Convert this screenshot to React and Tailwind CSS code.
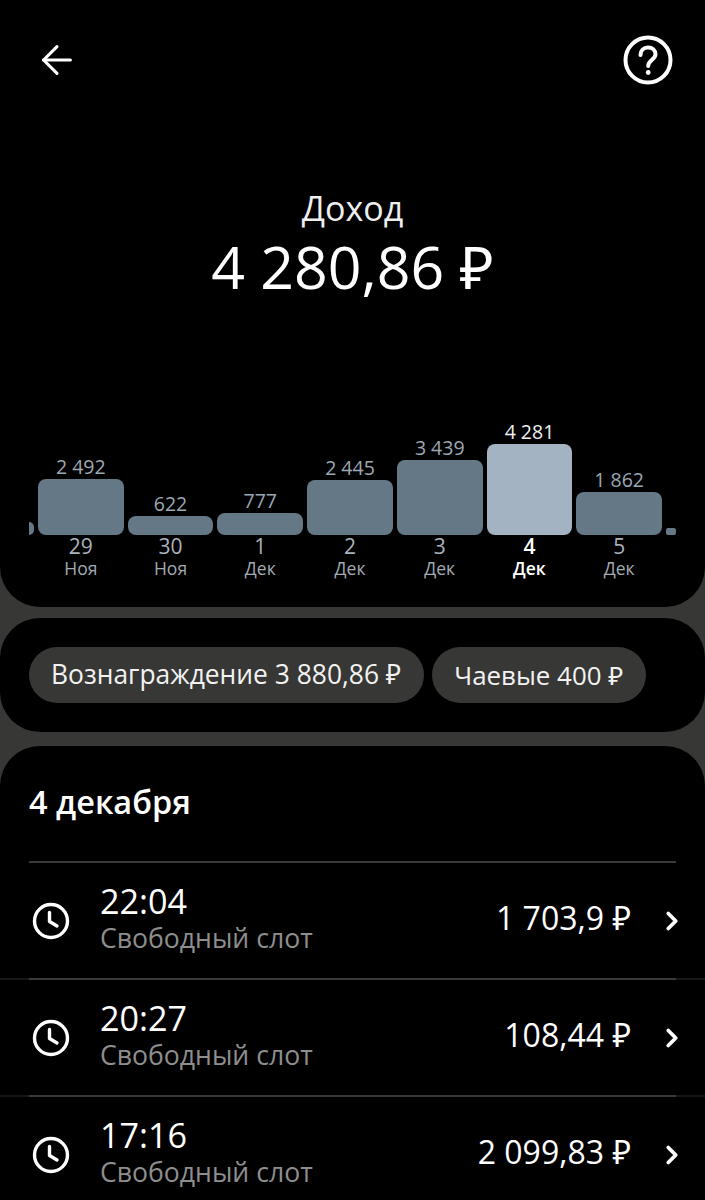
import React from "react";
import { ArrowLeft, ChevronRight } from "lucide-react";

const bars = [
  { value: "2 492", height: "h-[56px]", day: "29", month: "Ноя" },
  { value: "622", height: "h-[19px]", day: "30", month: "Ноя" },
  { value: "777", height: "h-[22px]", day: "1", month: "Дек" },
  { value: "2 445", height: "h-[55px]", day: "2", month: "Дек" },
  { value: "3 439", height: "h-[75px]", day: "3", month: "Дек" },
  { value: "4 281", height: "h-[91px]", day: "4", month: "Дек", active: true },
  { value: "1 862", height: "h-[43px]", day: "5", month: "Дек" },
];

const rows = [
  { time: "22:04", amount: "1 703,9 ₽" },
  { time: "20:27", amount: "108,44 ₽" },
  { time: "17:16", amount: "2 099,83 ₽" },
];

function ClockIcon() {
  return (
    <svg width="38" height="38" viewBox="0 0 38 38" fill="none" stroke="white" strokeWidth="3.4" strokeLinecap="round" strokeLinejoin="round">
      <circle cx="19" cy="19" r="16.5" />
      <path d="M17.5 10.5V19.5L25 24" />
    </svg>
  );
}

function HelpIcon() {
  return (
    <svg width="50" height="50" viewBox="0 0 50 50" fill="none" stroke="white" strokeWidth="4" strokeLinecap="round">
      <circle cx="25" cy="25" r="22.5" />
      <path d="M17.5 20C17.5 15.5 20.5 12.5 25 12.5C29.5 12.5 32.5 15.3 32.5 19.2C32.5 24.5 25.2 25 25.2 31" />
      <circle cx="25.2" cy="37.5" r="2.4" fill="white" stroke="none" />
    </svg>
  );
}

export default function App() {
  return (
    <div className="h-[1200px] overflow-hidden bg-[#373735] text-white font-['Open_Sans','Noto_Sans',sans-serif]">
      <div className="h-[607px] rounded-b-[40px] bg-black flex flex-col">
        <div className="flex items-center justify-between pl-[34px] pr-[32px] pt-[35px]">
          <ArrowLeft size={46} strokeWidth={1.6} />
          <HelpIcon />
        </div>

        <div className="mt-[101px] flex flex-col items-center">
          <div className="text-[34px] leading-[44px] text-[#eeeeee]">Доход</div>
          <div className="text-[59px] leading-[72px]">4 280,86 ₽</div>
        </div>

        <div className="mt-[118px] mx-[29px] flex items-end gap-[3.9px]">
          <div className="mb-[43px] h-[13px] w-[5px] rounded-r-full bg-[#657886]" />
          {bars.map((bar) => (
            <div key={bar.day} className="w-[86px] flex flex-col items-center">
              <div className={`text-[19.5px] leading-[24px] ${bar.active ? "text-[#eef1f3] font-medium" : "text-[#9ca8b3]"}`}>{bar.value}</div>
              <div className={`w-full rounded-[8px] ${bar.height} ${bar.active ? "bg-[#a3b3c2]" : "bg-[#657886]"}`} />
              <div className={`text-[21px] leading-[23px] ${bar.active ? "text-white font-semibold" : "text-[#aab2bb] font-medium"}`}>{bar.day}</div>
              <div className={`text-[17.5px] leading-[20px] ${bar.active ? "text-white font-semibold" : "text-[#a3abb4] font-medium"}`}>{bar.month}</div>
            </div>
          ))}
          <div className="mb-[43px] h-[7px] w-[10px] rounded-[2px] bg-[#657886]" />
        </div>
      </div>

      <div className="mt-[11px] h-[114px] rounded-[40px] bg-black flex items-center gap-[8px] px-[29px]">
        <div className="h-[56px] rounded-full bg-[#373735] pl-[22px] pr-[23px] flex items-center text-[26.4px] text-[#f2f2f2]">Вознаграждение 3 880,86 ₽</div>
        <div className="h-[56px] rounded-full bg-[#373735] pl-[22px] pr-[23px] flex items-center text-[25.9px] text-[#f2f2f2]">Чаевые 400 ₽</div>
      </div>

      <div className="mt-[14px] h-[500px] rounded-t-[40px] bg-black">
        <div className="px-[29px] pt-[36px] pb-[39px] text-[32.5px] leading-[40px] font-semibold">4 декабря</div>
        {rows.map((row, i) => (
          <div key={row.time} className={i > 0 ? "border-t-2 border-[#161616]" : ""}>
            <div className={`mx-[29px] h-[117px] border-t-2 border-[#3a3a3a] flex items-center ${i > 0 ? "-mt-[2px]" : ""}`}>
              <div className="ml-[3px] w-[68px] shrink-0"><ClockIcon /></div>
              <div className="flex-1 pb-[6px]">
                <div className="text-[34.2px] leading-[40px]">{row.time}</div>
                <div className="text-[26.6px] leading-[34px] text-[#8e8e8e]">Свободный слот</div>
              </div>
              <div className="text-[32px] pb-[6px]">{row.amount}</div>
              <ChevronRight className="ml-[26px] -mr-[11px]" size={30} strokeWidth={3} />
            </div>
          </div>
        ))}
      </div>
    </div>
  );
}
